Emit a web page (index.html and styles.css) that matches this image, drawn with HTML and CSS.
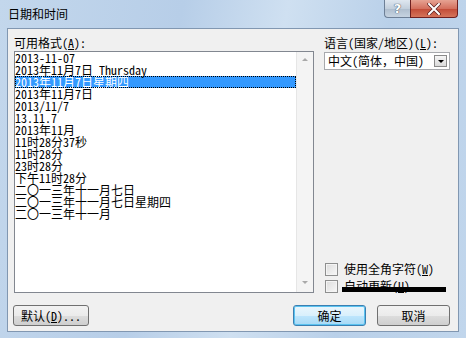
FILE: index.html
```html
<!DOCTYPE html>
<html lang="zh-CN">
<head>
    <meta charset="UTF-8">
    <title>日期和时间</title>
    <link rel="stylesheet" href="styles.css">
</head>
<body>
    <div class="window">
        <div class="titlebar">
            <span class="title">日期和时间</span>
            <div class="caption-buttons">
                <div class="cap-btn help">?</div>
                <div class="cap-btn close">
                    <svg width="14" height="12" viewBox="0 0 14 12">
                        <path d="M2 1 L12 11 M12 1 L2 11" stroke="#5a2020" stroke-width="3.4" stroke-linecap="round"/>
                        <path d="M2 1 L12 11 M12 1 L2 11" stroke="#ffffff" stroke-width="2" stroke-linecap="round"/>
                    </svg>
                </div>
            </div>
        </div>
        <div class="client">
            <div class="main">
                <div class="col-left">
                    <div class="label">可用格式(<u>A</u>):</div>
                    <div class="listbox">
                        <ul class="items" id="formats"></ul>
                        <div class="vscroll">
                            <span class="arrow up"></span>
                            <span class="arrow down"></span>
                        </div>
                    </div>
                </div>
                <div class="col-right">
                    <div class="label">语言(国家/地区)(<u>L</u>):</div>
                    <div class="combo">
                        <span class="combo-text">中文(简体，中国)</span>
                        <span class="combo-btn"><span class="tri"></span></span>
                    </div>
                    <div class="checks">
                        <div class="check"><span class="box"></span><span>使用全角字符(<u>W</u>)</span></div>
                        <div class="check"><span class="box"></span><span>自动更新(<u>U</u>)</span><span class="redact"></span></div>
                    </div>
                </div>
            </div>
            <div class="buttons">
                <div class="btn reset">默认(<u>D</u>)...</div>
                <div class="btn ok">确定</div>
                <div class="btn cancel">取消</div>
            </div>
        </div>
    </div>
    <script>
        const formats = [
            '2013-11-07',
            '2013年11月7日 Thursday',
            '2013年11月7日星期四',
            '2013年11月7日',
            '2013/11/7',
            '13.11.7',
            '2013年11月',
            '11时28分37秒',
            '11时28分',
            '23时28分',
            '下午11时28分',
            '二〇一三年十一月七日',
            '二〇一三年十一月七日星期四',
            '二〇一三年十一月'
        ];
        const selected = 2;

        const list = document.getElementById('formats');
        formats.forEach((text, i) => {
            const li = document.createElement('li');
            li.textContent = text;
            if (i === selected) li.classList.add('selected');
            list.appendChild(li);
        });
    </script>
</body>
</html>
```

FILE: styles.css
```css
html, body {
    margin: 0;
    height: 100%;
    overflow: hidden;
}
body {
    font-family: "Noto Sans Mono CJK SC", "Noto Sans CJK SC", monospace;
    font-size: 12px;
    line-height: 12px;
    color: #000;
    background: #b9cfe7;
}
u { text-decoration: underline; }
.window {
    width: 466px;
    height: 338px;
    display: flex;
    flex-direction: column;
    background: linear-gradient(100deg, #c3d7ec 0%, #b7cee8 35%, #cfe0f1 55%, #b9d0e9 75%, #c1d6ec 100%);
}
.titlebar {
    height: 28px;
    display: flex;
    align-items: flex-start;
    padding-left: 8px;
    padding-right: 8px;
}
.title {
    font-family: "Noto Sans CJK SC", sans-serif;
    font-size: 12px;
    line-height: 12px;
    margin-top: 8px;
    color: #000;
}
.caption-buttons {
    margin-left: auto;
    display: flex;
    margin-right: 0;
}
.cap-btn {
    height: 17px;
    border: 1px solid #6d7f96;
    border-top: none;
    display: flex;
    align-items: center;
    justify-content: center;
}
.help {
    width: 25px;
    border-right: none;
    border-bottom-left-radius: 4px;
    background: linear-gradient(#dfe7f0, #c3cfdc 50%, #aebdcd 51%, #c6d3e1);
    font-family: "DejaVu Sans", sans-serif;
    font-size: 13px;
    font-weight: bold;
    color: #ffffff;
    text-shadow: 0 0 1px #3b4a5e, 0 0 1px #3b4a5e;
}
.close {
    width: 46px;
    border-color: #6f2020;
    border-bottom-right-radius: 4px;
    background: linear-gradient(#e6a393, #d4705e 50%, #c14a36 51%, #d5745a);
}
.client {
    flex: 1;
    margin: 0 7px 6px 7px;
    border: 1px solid #8197b1;
    background: #f0f0f0;
    padding: 8px 8px 5px 6px;
    display: flex;
    flex-direction: column;
}
.main {
    display: grid;
    grid-template-columns: 300px 126px;
    column-gap: 10px;
}
.label {
    height: 12px;
    margin-bottom: 2px;
    white-space: nowrap;
}
.col-right .label {
    margin-bottom: 3px;
}
.listbox {
    height: 242px;
    box-sizing: border-box;
    border: 1px solid #828790;
    background: #fff;
    display: flex;
}
.items {
    list-style: none;
    margin: 0;
    padding: 0;
    flex: 1;
}
.items li {
    height: 12px;
    line-height: 12px;
    white-space: nowrap;
    box-sizing: border-box;
}
.items li.selected {
    background: #3399ff;
    color: #fff;
    outline: 1px dotted #000;
    outline-offset: -1px;
}
.vscroll {
    width: 17px;
    background: #f4f4f4;
    border-left: 1px solid #e6e6e6;
    display: flex;
    flex-direction: column;
    justify-content: space-between;
    align-items: center;
    padding: 6px 0 8px;
    box-sizing: border-box;
}
.arrow {
    width: 0;
    height: 0;
    border-left: 3px solid transparent;
    border-right: 3px solid transparent;
}
.arrow.up { border-bottom: 3px solid #a9a9a9; }
.arrow.down { border-top: 3px solid #a9a9a9; }
.col-right {
    display: flex;
    flex-direction: column;
}
.combo {
    height: 18px;
    box-sizing: border-box;
    border: 1px solid #a7a9ad;
    background: #fff;
    display: flex;
    align-items: center;
    padding-left: 3px;
    padding-right: 2px;
}
.combo-text {
    flex: 1;
    white-space: nowrap;
}
.combo-btn {
    width: 13px;
    height: 12px;
    box-sizing: border-box;
    border: 1px solid #8a8a8a;
    background: linear-gradient(#f6f6f6, #dadada);
    display: flex;
    align-items: center;
    justify-content: center;
}
.tri {
    width: 0;
    height: 0;
    border-left: 3px solid transparent;
    border-right: 3px solid transparent;
    border-top: 3px solid #000;
}
.checks {
    margin-top: auto;
    display: flex;
    flex-direction: column;
    gap: 5px;
    padding-left: 1px;
    margin-bottom: 1px;
}
.check {
    position: relative;
    display: flex;
    align-items: center;
    gap: 6px;
    height: 12px;
}
.box {
    width: 11px;
    height: 11px;
    border: 1px solid #8e8f8f;
    background: linear-gradient(135deg, #dcdcdc, #f8f8f8);
    box-shadow: inset 0 0 0 1px #f4f4f4;
}
.redact {
    position: absolute;
    left: 17px;
    top: 7px;
    width: 104px;
    height: 5px;
    background: #000;
}
.buttons {
    display: flex;
    margin-top: 12px;
}
.btn {
    height: 21px;
    box-sizing: border-box;
    border: 1px solid #707070;
    border-radius: 3px;
    background: linear-gradient(#f2f2f2, #ebebeb 50%, #dddddd 51%, #cfcfcf);
    display: flex;
    align-items: center;
    justify-content: center;
    white-space: nowrap;
}
.reset {
    width: 76px;
    margin-left: -1px;
}
.ok {
    width: 73px;
    margin-left: auto;
    border-color: #3c7fb1;
    background: linear-gradient(#eaf6fd, #d9f0fc 50%, #bee6fd 51%, #a7d9f5);
    box-shadow: inset 0 0 0 1px #5ac3f0;
}
.cancel {
    width: 73px;
    margin-left: 11px;
}
```
